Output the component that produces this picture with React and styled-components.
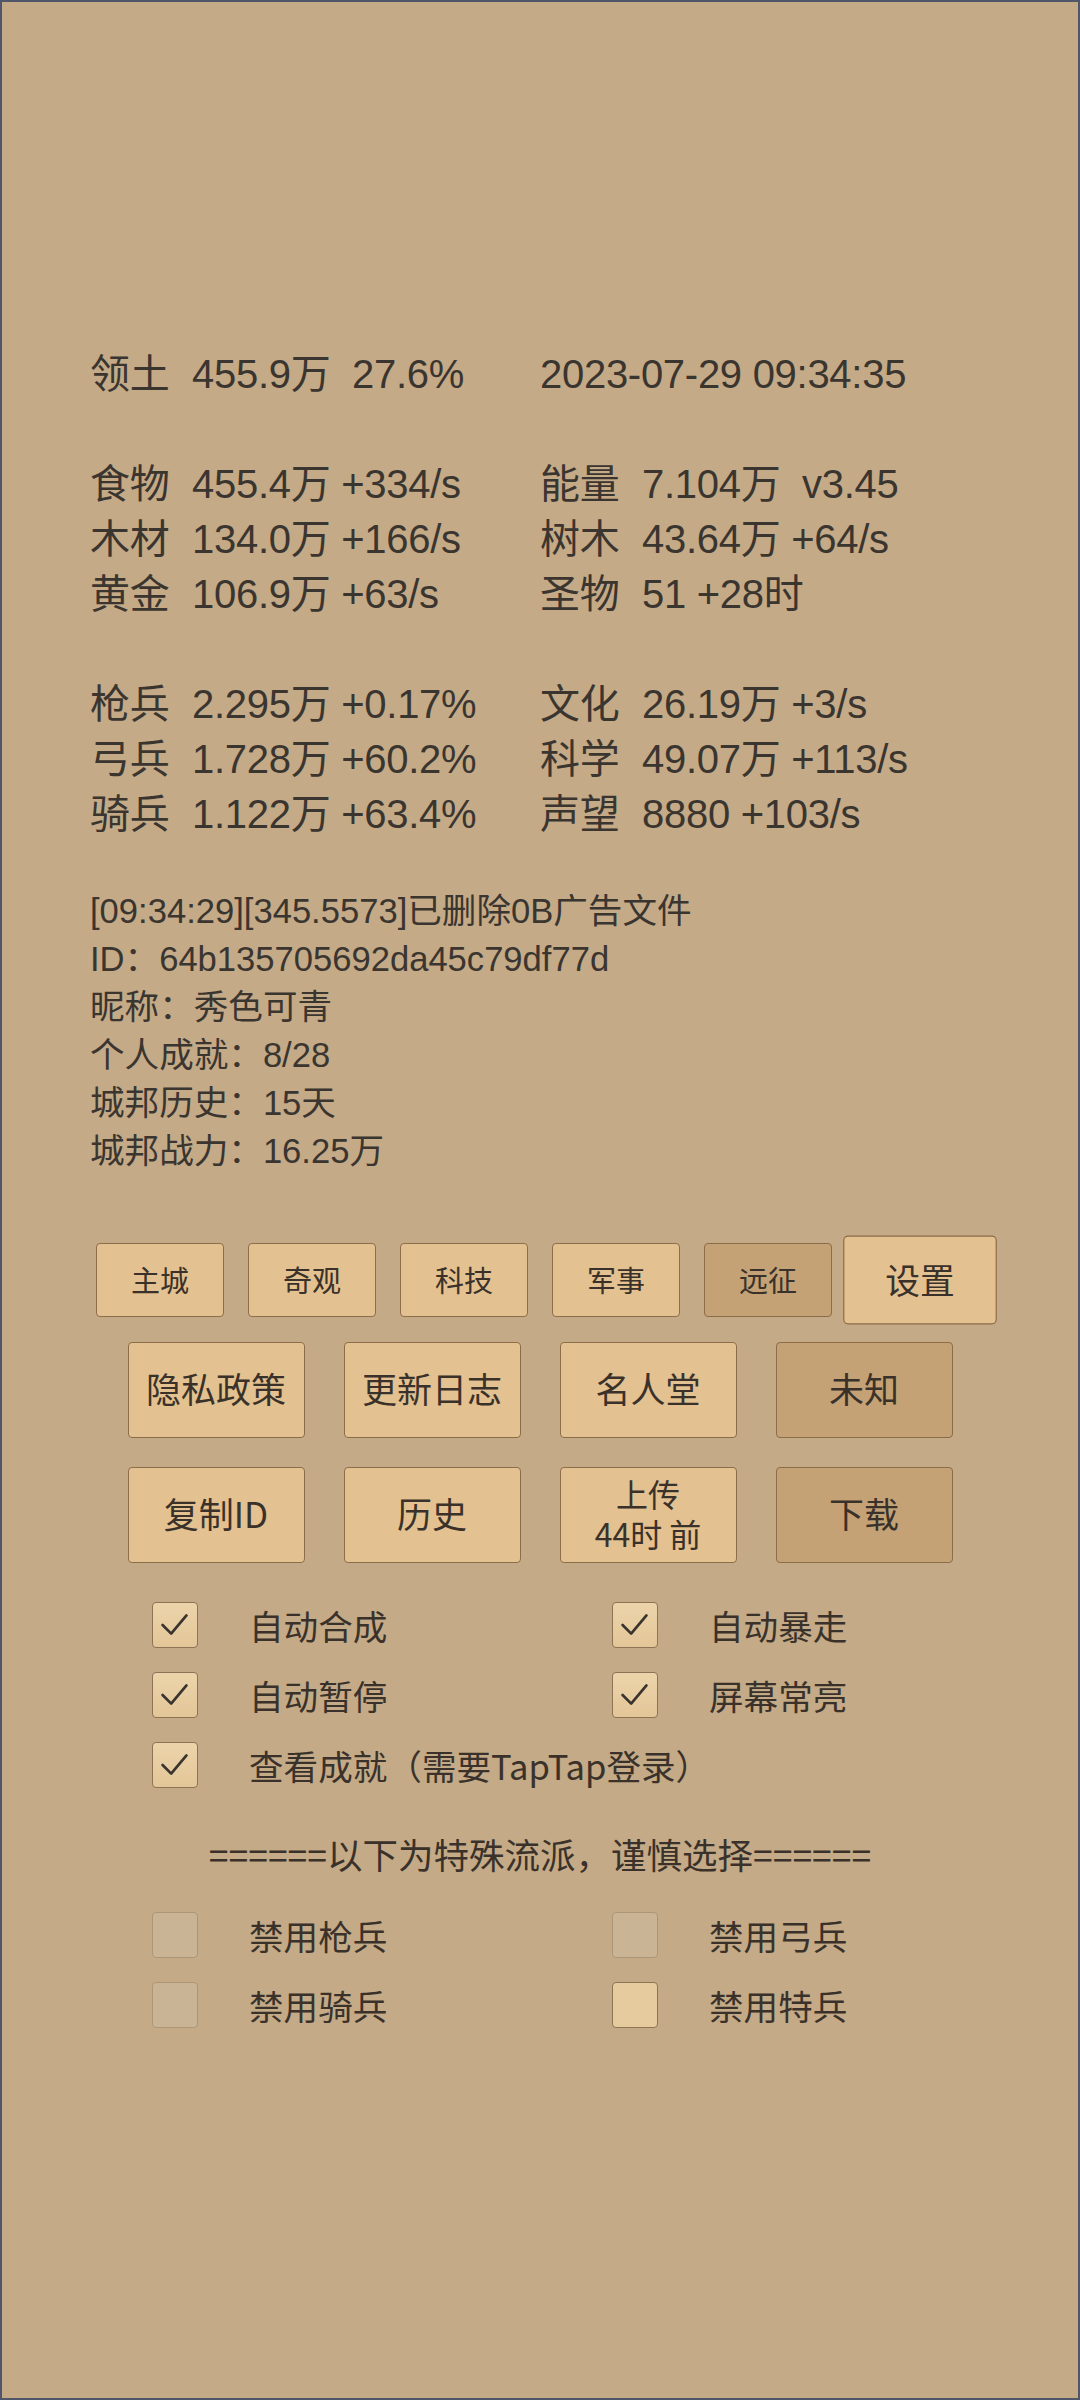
import React from "react";
import styled, { createGlobalStyle } from "styled-components";

const GlobalStyle = createGlobalStyle`
  html, body {
    margin: 0;
    padding: 0;
    background: #c4aa87;
  }
  * {
    box-sizing: border-box;
  }
`;

const stats = [
  [
    { label: "领土", value: "455.9万  27.6%" },
    { label: "", value: "2023-07-29 09:34:35" },
  ],
  null,
  [
    { label: "食物", value: "455.4万 +334/s" },
    { label: "能量", value: "7.104万  v3.45" },
  ],
  [
    { label: "木材", value: "134.0万 +166/s" },
    { label: "树木", value: "43.64万 +64/s" },
  ],
  [
    { label: "黄金", value: "106.9万 +63/s" },
    { label: "圣物", value: "51 +28时" },
  ],
  null,
  [
    { label: "枪兵", value: "2.295万 +0.17%" },
    { label: "文化", value: "26.19万 +3/s" },
  ],
  [
    { label: "弓兵", value: "1.728万 +60.2%" },
    { label: "科学", value: "49.07万 +113/s" },
  ],
  [
    { label: "骑兵", value: "1.122万 +63.4%" },
    { label: "声望", value: "8880 +103/s" },
  ],
];

const logLines = [
  "[09:34:29][345.5573]已删除0B广告文件",
  "ID：64b135705692da45c79df77d",
  "昵称：秀色可青",
  "个人成就：8/28",
  "城邦历史：15天",
  "城邦战力：16.25万",
];

const tabs = [
  { text: "主城" },
  { text: "奇观" },
  { text: "科技" },
  { text: "军事" },
  { text: "远征", dark: true },
  { text: "设置", big: true },
];

function Check() {
  return (
    <svg width="46" height="46" viewBox="0 0 46 46">
      <polyline
        points="10,23 19,32 35,13"
        fill="none"
        stroke="#3a342e"
        strokeWidth="2.8"
        strokeLinecap="round"
        strokeLinejoin="round"
      />
    </svg>
  );
}

function Option({ text, state, wide }) {
  return (
    <OptionRow $wide={wide}>
      <Box $state={state}>{state === "on" && <Check />}</Box>
      <OptionLabel>{text}</OptionLabel>
    </OptionRow>
  );
}

export default function App() {
  return (
    <>
      <GlobalStyle />
      <Screen>
        <StatGrid>
          {stats.map((row, i) =>
            row ? (
              row.map((s, j) => (
                <Stat key={i + "-" + j}>
                  {s.label && <StatLabel>{s.label}</StatLabel>}
                  <span>{s.value}</span>
                </Stat>
              ))
            ) : (
              <BlankRow key={i} />
            )
          )}
        </StatGrid>

        <Log>
          {logLines.map((l) => (
            <LogLine key={l}>{l}</LogLine>
          ))}
        </Log>

        <Buttons>
          <TabRow>
            {tabs.map((t) => (
              <Tab key={t.text} $dark={t.dark} $big={t.big}>
                {t.text}
              </Tab>
            ))}
          </TabRow>
          <BtnRow $top={25}>
            <Btn>隐私政策</Btn>
            <Btn>更新日志</Btn>
            <Btn>名人堂</Btn>
            <Btn $dark>未知</Btn>
          </BtnRow>
          <BtnRow $top={29}>
            <Btn>复制ID</Btn>
            <Btn>历史</Btn>
            <Btn $small>
              上传
              <br />
              44时 前
            </Btn>
            <Btn $dark>下载</Btn>
          </BtnRow>
        </Buttons>

        <Options $top={39}>
          <Option text="自动合成" state="on" />
          <Option text="自动暴走" state="on" />
          <Option text="自动暂停" state="on" />
          <Option text="屏幕常亮" state="on" />
          <Option text="查看成就（需要TapTap登录）" state="on" wide />
        </Options>

        <Divider>======以下为特殊流派，谨慎选择======</Divider>

        <Options $top={34}>
          <Option text="禁用枪兵" state="dim" />
          <Option text="禁用弓兵" state="dim" />
          <Option text="禁用骑兵" state="dim" />
          <Option text="禁用特兵" state="off" />
        </Options>
      </Screen>
    </>
  );
}

const Screen = styled.div`
  width: 1080px;
  height: 2400px;
  border: 2px solid #4f566a;
  background: #c4aa87;
  color: #3b3530;
  padding-top: 345px;
  overflow: hidden;
`;

const StatGrid = styled.div`
  display: grid;
  grid-template-columns: 450px 450px;
  padding-left: 88px;
  font-family: "Liberation Sans", "Noto Sans CJK SC", sans-serif;
  font-size: 40px;
  line-height: 55px;
  letter-spacing: -0.28px;
`;

const Stat = styled.div`
  display: flex;
  white-space: pre;
  height: 55px;
`;

const StatLabel = styled.span`
  width: 102px;
  flex: none;
`;

const BlankRow = styled.div`
  grid-column: 1 / 3;
  height: 55px;
`;

const Log = styled.div`
  margin-top: 45px;
  padding-left: 88px;
  font-family: "Liberation Sans", "Noto Sans CJK SC", sans-serif;
  font-size: 34.6px;
  line-height: 48px;
  white-space: pre;
`;

const LogLine = styled.div`
  height: 48px;
  overflow: hidden;
`;

const Buttons = styled.div`
  margin-top: 68px;
  display: flex;
  flex-direction: column;
  align-items: center;
`;

const TabRow = styled.div`
  display: flex;
  gap: 24px;
`;

const Tab = styled.div`
  width: 128px;
  height: 74px;
  display: flex;
  align-items: center;
  justify-content: center;
  padding-bottom: 2px;
  border: 1.5px solid #8c6d49;
  border-radius: 4px;
  background: ${(p) => (p.$dark ? "#c5a276" : "#e3c190")};
  font-family: "Noto Sans CJK SC", "Noto Sans", sans-serif;
  font-size: 29px;
  line-height: 1;
  color: #3a322a;
  transform: ${(p) => (p.$big ? "scale(1.2)" : "none")};
`;

const BtnRow = styled.div`
  margin-top: ${(p) => p.$top}px;
  display: flex;
  gap: 39px;
`;

const Btn = styled.div`
  width: 177px;
  height: 96px;
  display: flex;
  align-items: center;
  justify-content: center;
  text-align: center;
  padding-bottom: 5px;
  border: 1.5px solid #8c6d49;
  border-radius: 4px;
  background: ${(p) => (p.$dark ? "#c5a276" : "#e3c190")};
  font-family: "Noto Sans CJK SC", "Noto Sans", sans-serif;
  font-size: ${(p) => (p.$small ? "32px" : "35px")};
  line-height: ${(p) => (p.$small ? "40px" : "1")};
  color: #3a322a;
`;

const Options = styled.div`
  margin-top: ${(p) => p.$top}px;
  padding-left: 150px;
  display: grid;
  grid-template-columns: 460px 460px;
  row-gap: 24px;
`;

const OptionRow = styled.div`
  display: flex;
  align-items: center;
  gap: 51px;
  grid-column: ${(p) => (p.$wide ? "1 / 3" : "auto")};
`;

const Box = styled.div`
  width: 46px;
  height: 46px;
  flex: none;
  border-radius: 4px;
  border: 1.5px solid
    ${(p) => (p.$state === "dim" ? "#ad9676" : "#8d7455")};
  background: ${(p) =>
    p.$state === "dim"
      ? "#c9b596"
      : p.$state === "on"
      ? "linear-gradient(#ecd4aa, #e3c698)"
      : "#e6cb9e"};
  display: flex;
  align-items: center;
  justify-content: center;
`;

const OptionLabel = styled.span`
  font-family: "Noto Sans CJK SC", "Noto Sans", sans-serif;
  font-size: 34.6px;
  line-height: 46px;
  color: #3a322a;
  white-space: nowrap;
`;

const Divider = styled.div`
  margin-top: 42px;
  text-align: center;
  font-family: "Noto Sans CJK SC", "Noto Sans", sans-serif;
  font-size: 35.5px;
  line-height: 48px;
  color: #3a322a;
`;
